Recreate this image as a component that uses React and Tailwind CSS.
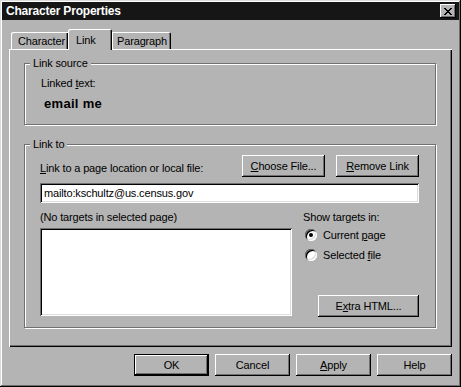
import React from "react";

const raised =
  "shadow-[inset_-1px_-1px_0_#000,inset_1px_1px_0_#fff,inset_-2px_-2px_0_#707070]";
const sunken =
  "shadow-[inset_1px_1px_0_#707070,inset_-1px_-1px_0_#fff,inset_2px_2px_0_#000,inset_-2px_-2px_0_#dcdcdc]";
const etched =
  "border border-[#707070] shadow-[1px_1px_0_#fff,inset_1px_1px_0_#fff]";

const U = ({ children }) => (
  <span className="underline underline-offset-[1px] decoration-1">{children}</span>
);

const Button = ({ children, w = "w-[83px]", isDefault = false }) => (
  <button
    type="button"
    className={`h-[22px] ${w} bg-[#b4b4b4] text-black flex items-center justify-center ${
      isDefault
        ? "shadow-[inset_0_0_0_1px_#000,inset_-2px_-2px_0_#000,inset_2px_2px_0_#fff,inset_-3px_-3px_0_#707070]"
        : raised
    }`}
  >
    {children}
  </button>
);

const Radio = ({ checked, children }) => (
  <div className="flex items-center h-[20px]">
    <div className="ml-[2px] w-[12px] h-[12px] rounded-full bg-white shadow-[inset_1px_1px_0_#707070,inset_-1px_-1px_0_#fff,inset_2px_2px_0_#000,inset_-2px_-2px_0_#dcdcdc] flex items-center justify-center">
      {checked && <div className="w-[4px] h-[4px] rounded-full bg-black" />}
    </div>
    <span className="ml-[6px]">{children}</span>
  </div>
);

const Group = ({ label, className, children }) => (
  <div className={`relative ${etched} ${className}`}>
    <span className="absolute left-[5px] -top-[8px] px-[3px] bg-[#b4b4b4] leading-[14px]">
      {label}
    </span>
    {children}
  </div>
);

export default function App() {
  return (
    <div
      className="w-[461px] h-[387px] bg-[#b4b4b4] p-[2px] flex flex-col text-[11px] tracking-[-0.15px] text-black shadow-[inset_-1px_-1px_0_#000,inset_1px_1px_0_#dcdcdc,inset_-2px_-2px_0_#707070,inset_2px_2px_0_#fff]"
      style={{ fontFamily: '"Liberation Sans", Arial, sans-serif' }}
    >
      {/* title bar */}
      <div className="h-[18px] bg-[#161616] flex items-center justify-between pl-[4px] pr-[3px]">
        <span className="text-white font-bold text-[12px] tracking-[-0.2px]">
          Character Properties
        </span>
        <button
          type="button"
          className={`w-[16px] h-[14px] bg-[#b4b4b4] ${raised} flex items-center justify-center`}
        >
          <svg width="8" height="7" viewBox="0 0 8 7" shapeRendering="crispEdges">
            <path d="M0 0h2v1h1v1h2V1h1V0h2v1h-1v1h-1v1h-1v1h1v1h1v1h1v1H6V6H5V5H3v1H2v1H0V6h1V5h1V4h1V3H2V2H1V1H0z" fill="#000" />
          </svg>
        </button>
      </div>

      <div className="flex-1 flex flex-col px-[7px] pt-[9px]">
        {/* tabs */}
        <div className="flex items-end h-[20px] pl-[2px] relative z-10">
          <div className="w-[57px] h-[17px] rounded-tl-[2px] shadow-[inset_1px_1px_0_#fff,inset_-1px_0_0_#000,inset_-2px_0_0_#707070] flex items-center pl-[7px] pt-[1px]">
            Character
          </div>
          <div className="w-[44px] h-[21px] -mb-px bg-[#b4b4b4] rounded-t-[2px] shadow-[inset_1px_1px_0_#fff,inset_-1px_0_0_#000,inset_-2px_0_0_#707070] flex items-start pl-[8px] pt-[3px]">
            Link
          </div>
          <div className="w-[59px] h-[17px] rounded-tr-[2px] shadow-[inset_1px_1px_0_#fff,inset_-1px_0_0_#000,inset_-2px_0_0_#707070] flex items-center pl-[5px] pt-[1px]">
            Paragraph
          </div>
        </div>

        {/* tab panel */}
        <div className="h-[298px] shadow-[inset_1px_1px_0_#fff,inset_-1px_-1px_0_#000,inset_-2px_-2px_0_#707070] pt-[14px] pl-[15px] pr-[16px] flex flex-col">
          <Group label="Link source" className="h-[62px] pl-[16px] pt-[12px]">
            <div className="leading-[14px]">
              Linked <U>t</U>ext:
            </div>
            <div className="mt-[6px] ml-[3px] font-bold text-[13px] tracking-[0.3px] leading-[16px]">
              email me
            </div>
          </Group>

          <Group label="Link to" className="mt-[19px] h-[184px] pl-[15px] pr-[16px] pt-[10px]">
            <div className="flex items-end justify-between h-[22px]">
              <span className="pb-[1px]">
                <U>L</U>ink to a page location or local file:
              </span>
              <div className="flex gap-[11px]">
                <Button>
                  <U>C</U>hoose File...
                </Button>
                <Button>
                  <U>R</U>emove Link
                </Button>
              </div>
            </div>
            <div className={`mt-[6px] h-[20px] bg-white ${sunken} flex items-center pl-[4px]`}>
              mailto:kschultz@us.census.gov
            </div>
            <div className="mt-[7px] flex">
              <div className="w-[252px] flex flex-col">
                <span className="leading-[14px]">(No targets in selected page)</span>
                <div className={`mt-[4px] h-[88px] bg-white ${sunken}`} />
              </div>
              <div className="flex-1 flex flex-col pl-[11px]">
                <span className="leading-[14px]">Show targets in:</span>
                <div className="mt-[1px]">
                  <Radio checked>
                    Current <U>p</U>age
                  </Radio>
                  <Radio>
                    Selected <U>f</U>ile
                  </Radio>
                </div>
                <div className="mt-[30px] flex justify-end">
                  <Button w="w-[101px]">
                    E<U>x</U>tra HTML...
                  </Button>
                </div>
              </div>
            </div>
          </Group>
        </div>

        {/* dialog buttons */}
        <div className="mt-[7px] flex justify-end gap-[6px]">
          <Button w="w-[75px]" isDefault>
            OK
          </Button>
          <Button w="w-[75px]">Cancel</Button>
          <Button w="w-[75px]">
            <U>A</U>pply
          </Button>
          <Button w="w-[75px]">Help</Button>
        </div>
      </div>
    </div>
  );
}
